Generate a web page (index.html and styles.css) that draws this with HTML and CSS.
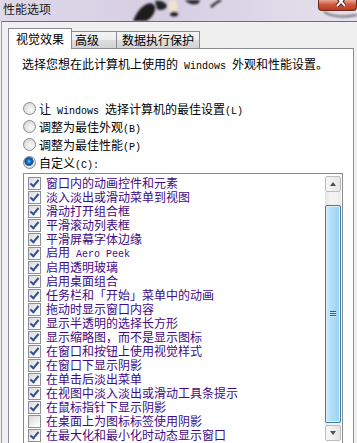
FILE: index.html
```html
<!DOCTYPE html>
<html>

<head>
    <title>性能选项</title>
    <link rel="stylesheet" href="styles.css">
</head>

<body>
    <!-- Title bar (glass with wallpaper showing through) -->
    <div class="titlebar">
        <svg class="wallpaper" width="357" height="21" viewBox="0 0 357 21">
            <defs>
                <filter id="blur" x="-20%" y="-20%" width="140%" height="140%">
                    <feGaussianBlur stdDeviation="1.2" />
                </filter>
            </defs>
            <g filter="url(#blur)">
                <path d="M133 21 C136 14 140 7 147 4 C152 2 156 5 155 10 C154 15 150 19 146 21 Z" fill="#1c1c1f" />
                <path d="M155 1 C160 0 166 2 167 6 C166 10 160 11 157 9 Z" fill="#242428" />
                <rect x="169" y="0" width="8" height="13" rx="3" fill="#efe3cf" />
                <ellipse cx="174" cy="14" rx="4" ry="2.5" fill="#1f1f22" />
                <path d="M185 0 C188 4 194 6 199 3 L200 0 Z" fill="#2a2a2e" />
                <path d="M211 7 C214 4 217 2 221 0" stroke="#2a2a2e" stroke-width="2.5" fill="none" />
                <path d="M324 12 C334 18 346 17 357 15" stroke="#6a6a70" stroke-width="2" fill="none" />
            </g>
        </svg>
        <span class="title">性能选项</span>
        <div class="close-btn">
            <svg width="39" height="11" viewBox="0 0 39 11">
                <path d="M19 -3 L27 6 M27 -3 L19 6" stroke="#5a1a10" stroke-width="4" />
                <path d="M19 -3 L27 6 M27 -3 L19 6" stroke="#ffffff" stroke-width="2" />
            </svg>
        </div>
    </div>

    <!-- Dialog body -->
    <div class="dialog">
        <div class="tabs">
            <div class="tab active">视觉效果</div>
            <div class="tab tab-advanced">高级</div>
            <div class="tab tab-dep">数据执行保护</div>
        </div>

        <div class="panel">
            <p class="intro">选择您想在此计算机上使用的<span class="en"> Windows </span>外观和性能设置。</p>

            <div class="options">
                <div class="option"><span class="radio"></span><span>让<span class="en"> Windows </span>选择计算机的最佳设置<span class="en">(L)</span></span></div>
                <div class="option"><span class="radio"></span><span>调整为最佳外观<span class="en">(B)</span></span></div>
                <div class="option"><span class="radio"></span><span>调整为最佳性能<span class="en">(P)</span></span></div>
                <div class="option"><span class="radio on"></span><span>自定义<span class="en">(C):</span></span></div>
            </div>

            <!-- Effects list -->
            <div class="listbox">
                <ul class="effects">
                    <li><span class="check on"></span><span>窗口内的动画控件和元素</span></li>
                    <li><span class="check on"></span><span>淡入淡出或滑动菜单到视图</span></li>
                    <li><span class="check on"></span><span>滑动打开组合框</span></li>
                    <li><span class="check on"></span><span>平滑滚动列表框</span></li>
                    <li><span class="check on"></span><span>平滑屏幕字体边缘</span></li>
                    <li><span class="check on"></span><span>启用<span class="en"> Aero Peek</span></span></li>
                    <li><span class="check on"></span><span>启用透明玻璃</span></li>
                    <li><span class="check on"></span><span>启用桌面组合</span></li>
                    <li><span class="check on"></span><span>任务栏和「开始」菜单中的动画</span></li>
                    <li><span class="check on"></span><span>拖动时显示窗口内容</span></li>
                    <li><span class="check on"></span><span>显示半透明的选择长方形</span></li>
                    <li><span class="check on"></span><span>显示缩略图，而不是显示图标</span></li>
                    <li><span class="check on"></span><span>在窗口和按钮上使用视觉样式</span></li>
                    <li><span class="check on"></span><span>在窗口下显示阴影</span></li>
                    <li><span class="check on"></span><span>在单击后淡出菜单</span></li>
                    <li><span class="check on"></span><span>在视图中淡入淡出或滑动工具条提示</span></li>
                    <li><span class="check on"></span><span>在鼠标指针下显示阴影</span></li>
                    <li><span class="check"></span><span>在桌面上为图标标签使用阴影</span></li>
                    <li><span class="check on"></span><span>在最大化和最小化时动态显示窗口</span></li>
                </ul>
                <div class="scrollbar">
                    <div class="sb-btn up"></div>
                    <div class="sb-track">
                        <div class="sb-thumb"><span class="sb-grip"></span></div>
                    </div>
                    <div class="sb-btn down"></div>
                </div>
            </div>
        </div>
    </div>
</body>

</html>
```

FILE: styles.css
```css
body {
    margin: 0;
    width: 357px;
    height: 443px;
    overflow: hidden;
    background-color: #f0f0f0;
    font-family: "Noto Sans CJK SC", sans-serif;
    font-size: 12px;
    color: #000;
}

.en {
    font-family: "Liberation Mono", monospace;
    font-size: 10px;
    white-space: pre;
}

/* Title bar */

.titlebar {
    position: relative;
    height: 21px;
    background: linear-gradient(to right, #e0d9e9, #d6cde3 45%, #e6e1ec);
}

.wallpaper {
    position: absolute;
    left: 0;
    top: 0;
}

.title {
    position: relative;
    display: block;
    padding-left: 3px;
    line-height: 17px;
    color: #1a1a1a;
}

.close-btn {
    position: absolute;
    right: 0;
    top: 0;
    width: 39px;
    height: 11px;
    box-sizing: border-box;
    border: 1px solid #6b2a1d;
    border-top: none;
    border-radius: 0 0 4px 4px;
    background: linear-gradient(#e9a896, #d0583d 45%, #b83a20);
    overflow: hidden;
}

.close-btn svg {
    display: block;
    margin: 0 -1px;
}

/* Dialog */

.dialog {
    margin-left: 1px;
    border-top: 1px solid #6e6d7a;
    border-left: 1px solid #9c9ca6;
    padding-top: 6px;
}

.tabs {
    display: flex;
    align-items: flex-end;
    height: 20px;
    padding-left: 6px;
}

.tab {
    box-sizing: border-box;
    height: 17px;
    line-height: 16px;
    border: 1px solid #898c95;
    border-bottom: none;
    background: linear-gradient(#f4f4f4, #ececec 50%, #dedede 50%, #d3d3d3);
    white-space: nowrap;
}

.tab.active {
    position: relative;
    z-index: 1;
    width: 64px;
    height: 21px;
    line-height: 19px;
    margin-bottom: -1px;
    text-align: center;
    background: #fff;
}

.tab-advanced {
    width: 45px;
    padding-left: 3px;
    border-left: none;
}

.tab-dep {
    width: 83px;
    padding-left: 5px;
    border-left: none;
}

.panel {
    box-sizing: border-box;
    width: 346px;
    height: 395px;
    margin-left: 6px;
    padding: 7px 0 0 13px;
    border: 1px solid #898c95;
    border-bottom: none;
    background-color: #fff;
}

.intro {
    margin: 0;
    line-height: 16px;
}

.options {
    margin: 24px 0 0 1px;
}

.option {
    display: flex;
    align-items: center;
    height: 18px;
}

.radio {
    box-sizing: border-box;
    width: 13px;
    height: 13px;
    margin-right: 3px;
    border: 1px solid #8b8b8b;
    border-radius: 50%;
    background: radial-gradient(circle at 65% 65%, #fbfbfb, #dcdcdc 70%, #c9c9c9);
}

.radio.on {
    background: radial-gradient(circle at 45% 40%, #8fd6ff 0, #1e86dc 1.5px, #0b4e9e 3.5px, #5a7fae 4.5px, #f2f2f2 5px, #d6d6d6 6.5px);
}

/* Effects list box */

.listbox {
    box-sizing: border-box;
    display: flex;
    width: 320px;
    height: 272px;
    margin: 2px 0 0 1px;
    padding: 2px 1px 3px 0;
    border: 1px solid #898989;
}

.effects {
    flex: 1;
    list-style: none;
    margin: 0;
    padding: 0 0 0 4px;
}

.effects li {
    display: flex;
    align-items: center;
    height: 14px;
    line-height: 14px;
    color: #3f0a86;
    white-space: nowrap;
}

.check {
    position: relative;
    box-sizing: border-box;
    flex-shrink: 0;
    width: 13px;
    height: 13px;
    margin-right: 5px;
    border: 1px solid #8e8f8f;
    background: linear-gradient(135deg, #d9d9d9, #f6f6f6 70%, #fefefe);
}

.check.on::after {
    content: "";
    position: absolute;
    left: 3px;
    top: 0;
    width: 3px;
    height: 7px;
    border: solid #34508f;
    border-width: 0 2px 2px 0;
    transform: rotate(40deg);
}

/* Scroll bar */

.scrollbar {
    display: flex;
    flex-direction: column;
    width: 16px;
}

.sb-btn {
    box-sizing: border-box;
    display: flex;
    align-items: center;
    justify-content: center;
    height: 16px;
    border: 1px solid #bcbcbc;
    border-radius: 2px;
    background: linear-gradient(to right, #f7f7f7, #e6e6e6);
}

.sb-btn::before {
    content: "";
    border-left: 3px solid transparent;
    border-right: 3px solid transparent;
}

.sb-btn.up::before {
    border-bottom: 4px solid #4f4f4f;
}

.sb-btn.down::before {
    border-top: 4px solid #4f4f4f;
}

.sb-track {
    display: flex;
    flex-direction: column;
    flex: 1;
    padding: 13px 0 2px;
    background: linear-gradient(to right, #e3e3e3, #f2f2f2 30%, #f2f2f2 70%, #e8e8e8);
}

.sb-thumb {
    box-sizing: border-box;
    display: flex;
    align-items: center;
    justify-content: center;
    flex: 1;
    border: 1px solid #3d7bad;
    border-radius: 2px;
    box-shadow: inset 0 0 0 1px #dff2fc;
    background: linear-gradient(to right, #cdecfb, #b0def7 40%, #9ad3f3);
}

.sb-grip {
    width: 6px;
    height: 6px;
    background: repeating-linear-gradient(#2a5f8c 0, #2a5f8c 1px, #cbe9fa 1px, #cbe9fa 2px);
}
```
